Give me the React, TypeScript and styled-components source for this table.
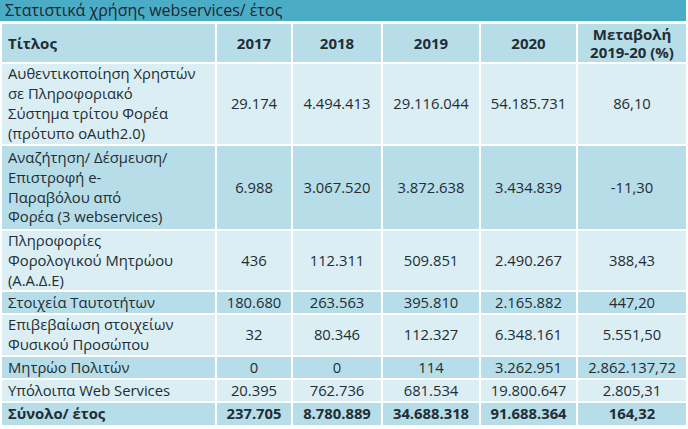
import React from "react";
import styled, { createGlobalStyle } from "styled-components";

const Global = createGlobalStyle`
  html, body { margin: 0; padding: 0; background: #ffffff; }
  body { font-family: "Open Sans", "Noto Sans", sans-serif; }
`;

const Wrap = styled.div`
  width: 686px;
  display: flex;
  flex-direction: column;
`;

const TitleBar = styled.div`
  height: 21px;
  background: #4bacc6;
  color: #1b2830;
  font-size: 16px;
  line-height: 21px;
  padding-left: 5px;
  border-bottom: 1px solid #ffffff;
  white-space: nowrap;
`;

const Table = styled.table`
  width: 686px;
  border-collapse: collapse;
  table-layout: fixed;
  color: #222d35;
  font-size: 14.8px;
  line-height: 19.8px;
`;

const Row = styled.tr<{ $h: number; $dark?: boolean; $bold?: boolean }>`
  height: ${(p) => p.$h}px;
  background: ${(p) => (p.$dark ? "#b7dde8" : "#dbeef3")};
  font-weight: ${(p) => (p.$bold ? 700 : 400)};
`;

const Cell = styled.td<{ $left?: boolean }>`
  border: 2px solid #ffffff;
  padding: 0 ${(p) => (p.$left ? "6px" : "0")};
  text-align: ${(p) => (p.$left ? "left" : "center")};
  vertical-align: middle;
  white-space: nowrap;
  overflow: visible;
`;

const HeadCell = styled(Cell)`
  font-weight: 700;
  line-height: 18.5px;
  font-size: 15px;
`;

const cols = [215, 76, 90, 98, 97, 110];

type R = { t: string[]; v: string[]; h: number };

const rows: R[] = [
  {
    t: ["Αυθεντικοποίηση Χρηστών", "σε Πληροφοριακό", "Σύστημα τρίτου Φορέα", "(πρότυπο oAuth2.0)"],
    v: ["29.174", "4.494.413", "29.116.044", "54.185.731", "86,10"],
    h: 82,
  },
  {
    t: ["Αναζήτηση/ Δέσμευση/", "Επιστροφή e-", "Παραβόλου από", "Φορέα (3 webservices)"],
    v: ["6.988", "3.067.520", "3.872.638", "3.434.839", "-11,30"],
    h: 85,
  },
  {
    t: ["Πληροφορίες", "Φορολογικού Μητρώου", "(Α.Α.Δ.Ε)"],
    v: ["436", "112.311", "509.851", "2.490.267", "388,43"],
    h: 61,
  },
  {
    t: ["Στοιχεία Ταυτοτήτων"],
    v: ["180.680", "263.563", "395.810", "2.165.882", "447,20"],
    h: 23,
  },
  {
    t: ["Επιβεβαίωση στοιχείων", "Φυσικού Προσώπου"],
    v: ["32", "80.346", "112.327", "6.348.161", "5.551,50"],
    h: 41,
  },
  {
    t: ["Μητρώο Πολιτών"],
    v: ["0", "0", "114", "3.262.951", "2.862.137,72"],
    h: 23,
  },
  {
    t: ["Υπόλοιπα Web Services"],
    v: ["20.395", "762.736", "681.534", "19.800.647", "2.805,31"],
    h: 23,
  },
];

export default function App() {
  return (
    <Wrap>
      <Global />
      <TitleBar>Στατιστικά χρήσης webservices/ έτος</TitleBar>
      <Table>
        <colgroup>
          {cols.map((w, i) => (
            <col key={i} style={{ width: w }} />
          ))}
        </colgroup>
        <tbody>
          <Row $h={40} $dark>
            <HeadCell $left>Τίτλος</HeadCell>
            <HeadCell>2017</HeadCell>
            <HeadCell>2018</HeadCell>
            <HeadCell>2019</HeadCell>
            <HeadCell>2020</HeadCell>
            <HeadCell>
              Μεταβολή
              <br />
              2019-20 (%)
            </HeadCell>
          </Row>
          {rows.map((r, i) => (
            <Row key={i} $h={r.h} $dark={i % 2 === 1}>
              <Cell $left>
                {r.t.map((l, j) => (
                  <React.Fragment key={j}>
                    {j > 0 && <br />}
                    {l}
                  </React.Fragment>
                ))}
              </Cell>
              {r.v.map((v, j) => (
                <Cell key={j}>{v}</Cell>
              ))}
            </Row>
          ))}
          <Row $h={24} $dark $bold>
            <Cell $left>Σύνολο/ έτος</Cell>
            <Cell>237.705</Cell>
            <Cell>8.780.889</Cell>
            <Cell>34.688.318</Cell>
            <Cell>91.688.364</Cell>
            <Cell>164,32</Cell>
          </Row>
        </tbody>
      </Table>
    </Wrap>
  );
}
